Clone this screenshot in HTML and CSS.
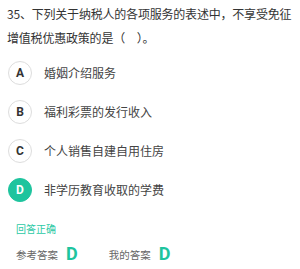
FILE: index.html
```html
<!DOCTYPE html>
<html lang="zh">
<head>
<meta charset="utf-8">
<link rel="stylesheet" href="styles.css">
</head>
<body>
<div class="page">
  <p class="question">35、下列关于纳税人的各项服务的表述中，不享受免征增值税优惠政策的是（　）。</p>
  <ul class="options">
    <li class="option"><span class="badge">A</span><span class="label">婚姻介绍服务</span></li>
    <li class="option"><span class="badge">B</span><span class="label">福利彩票的发行收入</span></li>
    <li class="option"><span class="badge">C</span><span class="label">个人销售自建自用住房</span></li>
    <li class="option selected"><span class="badge">D</span><span class="label">非学历教育收取的学费</span></li>
  </ul>
  <div class="result">
    <div class="status">回答正确</div>
    <div class="answers">
      <div class="answer"><span class="answer-label">参考答案</span><span class="answer-value">D</span></div>
      <div class="answer"><span class="answer-label">我的答案</span><span class="answer-value">D</span></div>
    </div>
  </div>
</div>
</body>
</html>
```
FILE: styles.css
```css
* { box-sizing: border-box; }
html, body { margin: 0; padding: 0; background: #fff; }
body {
  font-family: "Noto Sans CJK SC", "Liberation Sans", sans-serif;
  color: #333;
  width: 300px;
  height: 269px;
  overflow: hidden;
}
.page { padding: 2px 7px 0 7px; }
.question {
  margin: 0;
  font-size: 12px;
  line-height: 24px;
  color: #333;
  letter-spacing: -0.2px;
}
.options {
  list-style: none;
  margin: 3px 0 0 0;
  padding: 0;
}
.option {
  display: flex;
  align-items: center;
  height: 39px;
  gap: 12px;
}
.badge {
  width: 24px;
  height: 24px;
  flex: none;
  border-radius: 50%;
  border: 1px solid #ddd;
  display: flex;
  align-items: center;
  justify-content: center;
  font-family: "Roboto", "Liberation Sans", sans-serif;
  font-weight: 700;
  font-size: 12px;
  color: #333;
  margin-left: 1px;
}
.option.selected .badge {
  background: #1ec49e;
  border-color: #1ec49e;
  color: #fff;
}
.label {
  font-size: 12px;
  color: #444;
}
.result { padding-left: 9px; margin-top: 13px; }
.status {
  font-size: 10px;
  line-height: 14px;
  color: #2cc9a5;
}
.answers {
  display: flex;
  align-items: center;
  margin-top: 8px;
  gap: 31px;
}
.answer { display: flex; align-items: center; gap: 8px; }
.answer-label { font-size: 10.5px; color: #666; }
.answer-value {
  font-family: "Roboto", "Liberation Sans", sans-serif;
  font-weight: 700;
  font-size: 18px;
  line-height: 20px;
  color: #1ec49e;
}
```
